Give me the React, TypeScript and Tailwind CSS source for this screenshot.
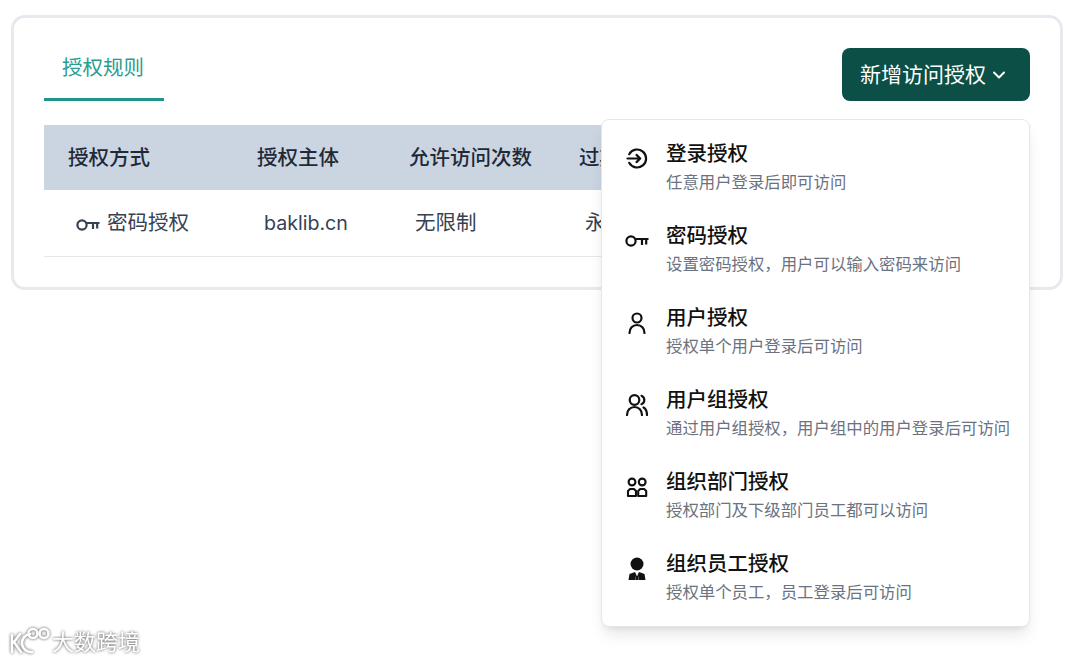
import type { ReactNode } from 'react';

const LoginIcon = () => (
  <svg width="24" height="24" viewBox="0 0 24 24" fill="none" stroke="currentColor" strokeWidth="2.200" strokeLinecap="round" strokeLinejoin="round">
    <path d="M4.200 8.200A9 9 0 1 1 4.200 16.800" />
    <path d="M2.500 12.500h12.500M11.500 8.900 15.200 12.500l-3.700 3.600" />
  </svg>
);

const KeyIcon = () => (
  <svg width="24" height="24" viewBox="0 0 24 24" fill="none" stroke="currentColor" strokeWidth="2.200">
    <circle cx="6" cy="13" r="4.600" />
    <path d="M10.500 11h13M17 11V17M21.200 11V16.500" />
  </svg>
);

const UserIcon = () => (
  <svg width="24" height="24" viewBox="0 0 24 24" fill="none" stroke="currentColor" strokeWidth="2.200" strokeLinecap="round">
    <circle cx="12" cy="8" r="4.500" />
    <path d="M4.500 23c0-4.500 3-8 7.500-8s7.500 3.500 7.500 8" />
  </svg>
);

const UsersIcon = () => (
  <svg width="24" height="24" viewBox="0 0 24 24" fill="none" stroke="currentColor" strokeWidth="2.200" strokeLinecap="round">
    <circle cx="9.500" cy="8" r="4.800" />
    <path d="M2 23c0-4.500 3-8 7.500-8s7.500 3.500 7.500 8" />
    <path d="M16.500 3.800c1.800.8 2.800 2.400 2.800 4.200s-1 3.400-2.800 4.200" />
    <path d="M18.500 15.500c2.300 1.200 3.500 4 3.500 7.500" />
  </svg>
);

const GroupIcon = () => (
  <svg width="24" height="24" viewBox="0 0 24 24" fill="none" stroke="currentColor" strokeWidth="2.100" strokeLinejoin="round">
    <circle cx="7" cy="8" r="3.400" />
    <circle cx="17.200" cy="8" r="3.400" />
    <path d="M5 15h4l2 2v5H3v-5z" />
    <path d="M15.200 15h4l2 2v5h-8v-5z" />
  </svg>
);

const StaffIcon = () => (
  <svg width="24" height="24" viewBox="0 0 24 24" fill="currentColor">
    <circle cx="12" cy="8" r="6.500" />
    <path d="M10 16 4.500 18 3.500 24h6.700l1-5.500L10 16z" />
    <path d="M14 16l5.500 2 1 6h-6.700l-1-5.500L14 16z" />
    <path d="M11 19.500h2l.6 4.500h-3.200z" />
  </svg>
);

const menuItems: { icon: ReactNode; title: string; desc: string }[] = [
  { icon: <LoginIcon />, title: '登录授权', desc: '任意用户登录后即可访问' },
  { icon: <KeyIcon />, title: '密码授权', desc: '设置密码授权，用户可以输入密码来访问' },
  { icon: <UserIcon />, title: '用户授权', desc: '授权单个用户登录后可访问' },
  { icon: <UsersIcon />, title: '用户组授权', desc: '通过用户组授权，用户组中的用户登录后可访问' },
  { icon: <GroupIcon />, title: '组织部门授权', desc: '授权部门及下级部门员工都可以访问' },
  { icon: <StaffIcon />, title: '组织员工授权', desc: '授权单个员工，员工登录后可访问' },
];

const App = () => {
  return (
    <div className="relative h-[663px] w-[1080px] overflow-hidden bg-white pl-[11px] pt-[15px] font-['Inter','Noto_Sans_CJK_SC',sans-serif]">
      <div className="w-[1052px] rounded-[14px] border-[3px] border-[#e6e9ee] pb-[30px] pl-[30px] pr-[30px] pt-[30px]">
        <div className="flex items-end justify-between">
          <div className="h-[53px] w-[120px] border-b-[3px] border-[#1f9488] pl-[18px] pt-[6px] text-[20.5px] leading-[28px] text-[#2a9d8f]">
            授权规则
          </div>
          <div className="relative">
            <button className="flex h-[53px] w-[188px] items-center gap-[5px] rounded-lg bg-[#0b4f47] pl-[18px] text-[21px] text-white">
              新增访问授权
              <svg width="16" height="16" viewBox="0 0 16 16" fill="none" stroke="currentColor" strokeWidth="2" strokeLinecap="round" strokeLinejoin="round">
                <path d="M3 5.500 8 10.500l5-5" />
              </svg>
            </button>
            <div className="absolute right-0 top-full z-10 mt-[18px] w-[429px] rounded-lg border border-[#e5e7eb] bg-white py-[7px] shadow-lg">
              {menuItems.map((item) => (
                <div key={item.title} className="flex h-[82px] items-start pl-[23px]">
                  <div className="mt-[19px] w-[24px] shrink-0 text-[#111]">{item.icon}</div>
                  <div className="ml-[17px] pt-[13px]">
                    <div className="text-[20.5px] font-medium leading-[28px] text-[#111]">{item.title}</div>
                    <div className="mt-[2px] text-[16.4px] leading-[24px] text-[#6b7280]">{item.desc}</div>
                  </div>
                </div>
              ))}
            </div>
          </div>
        </div>
        <table className="mt-[24px] w-full table-fixed border-collapse">
          <thead>
            <tr className="h-[65px] bg-[#cbd5e1] text-left text-[20.5px] text-[#1f2937]">
              <th className="w-[189px] pl-[24px] pt-[1px] font-medium">授权方式</th>
              <th className="w-[152px] pl-[24px] pt-[1px] font-medium">授权主体</th>
              <th className="w-[170px] pl-[24px] pt-[1px] font-medium">允许访问次数</th>
              <th className="pl-[24px] pt-[1px] font-medium">过期时间</th>
            </tr>
          </thead>
          <tbody>
            <tr className="h-[66px] border-b border-[#e5e7eb] text-[20.5px] text-[#374151]">
              <td className="pl-[32px] pt-[2px]">
                <span className="flex items-center gap-[7px]">
                  <KeyIcon />
                  密码授权
                </span>
              </td>
              <td className="pl-[31px] pt-[2px] text-[19.6px]">baklib.cn</td>
              <td className="pl-[30px] pt-[2px]">无限制</td>
              <td className="pl-[30px] pt-[2px]">永久有效</td>
            </tr>
          </tbody>
        </table>
      </div>
      {/* watermark */}
      <div className="absolute left-[8px] top-[627px] flex items-center text-white drop-shadow-[0_0_1.500px_rgba(0,0,0,0.7)]">
        <svg width="44" height="30" viewBox="0 0 44 30" fill="none" stroke="currentColor" strokeWidth="2.600" strokeLinecap="round">
          <path d="M4 8v17M12 7 6 15l7 10" />
          <path d="M22 7a9 9 0 1 0 2 18" />
          <circle cx="25" cy="6.500" r="4.500" />
          <circle cx="36" cy="6.500" r="4.500" />
        </svg>
        <span className="text-[22px] font-normal leading-[30px]">大数跨境</span>
      </div>
    </div>
  );
};

export default App;
